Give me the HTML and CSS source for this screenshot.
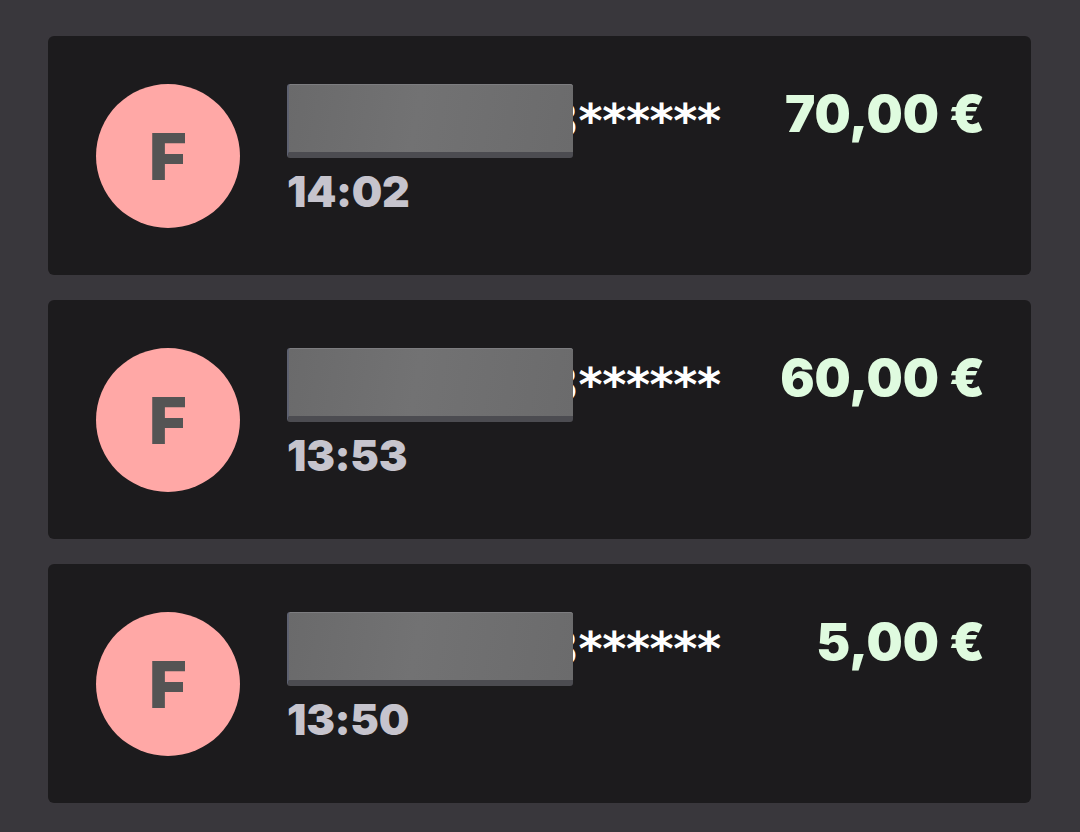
FILE: index.html
```html
<!DOCTYPE html>
<html lang="en">
<head>
    <meta charset="UTF-8">
    <meta name="viewport" content="width=device-width, initial-scale=1.0">
    <title>Transactions</title>
    <link rel="stylesheet" href="styles.css">
</head>
<body>

<div class="list">
    <div class="tx">
        <div class="avatar">F</div>
        <div class="info">
            <div class="name"><span class="redact"></span>3******</div>
            <div class="time">14:02</div>
        </div>
        <div class="amount">70,00 €</div>
    </div>
    <div class="tx">
        <div class="avatar">F</div>
        <div class="info">
            <div class="name"><span class="redact"></span>3******</div>
            <div class="time">13:53</div>
        </div>
        <div class="amount">60,00 €</div>
    </div>
    <div class="tx">
        <div class="avatar">F</div>
        <div class="info">
            <div class="name"><span class="redact"></span>3******</div>
            <div class="time">13:50</div>
        </div>
        <div class="amount">5,00 €</div>
    </div>
</div>

</body>
</html>
```

FILE: styles.css
```css
body {
    margin: 0;
    background: #39373c;
    font-family: Inter, "Noto Sans", sans-serif;
}
.list {
    display: flex;
    flex-direction: column;
    gap: 25px;
    padding: 36px 49px 29px 48px;
}
.tx {
    display: flex;
    align-items: flex-start;
    height: 239px;
    box-sizing: border-box;
    padding: 48px 46px 0 48px;
    background: #1c1b1d;
    border-radius: 6px;
}
.avatar {
    width: 144px;
    height: 144px;
    flex-shrink: 0;
    border-radius: 50%;
    background: #ffa8a6;
    color: #545454;
    font-size: 64px;
    font-weight: 900;
    display: flex;
    align-items: center;
    justify-content: center;
}
.info {
    flex: 1;
    margin-left: 47px;
}
.name {
    position: relative;
    height: 74px;
    line-height: 74px;
    padding-left: 260px;
    color: #fff;
    font-family: "DejaVu Sans", sans-serif;
    font-size: 46px;
    font-weight: 700;
    letter-spacing: -0.4px;
}
.redact {
    position: absolute;
    left: 0;
    top: 0;
    width: 286px;
    height: 74px;
    box-sizing: border-box;
    border-radius: 3px;
    background: linear-gradient(100deg, #6a6a6b 0%, #727273 45%, #6b6b6c 100%);
    border-bottom: 6px solid #4c4c51;
    border-left: 2px solid #5d6170;
    box-shadow: inset 0 1px 0 #7d7d80;
}
.time {
    margin-top: 6px;
    line-height: 54px;
    color: #c6c4cd;
    font-size: 43px;
    font-weight: 900;
    letter-spacing: -0.3px;
}
.amount {
    margin-top: 4px;
    line-height: 52px;
    color: #dffbdf;
    font-size: 51px;
    font-weight: 900;
}
```
